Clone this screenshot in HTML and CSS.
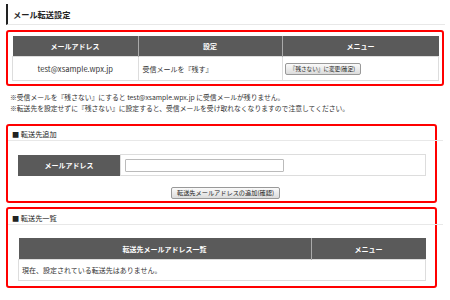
FILE: index.html
```html
<!DOCTYPE html>
<html lang="ja">
<head>
<meta charset="UTF-8">
<title>メール転送設定</title>
<link rel="stylesheet" href="styles.css">
</head>
<body>
    <div class="page">
        <h1 class="title">メール転送設定</h1>

        <!-- 現在の設定 -->
        <div class="box box-setting">
            <table class="list">
                <tr>
                    <th class="col-mail">メールアドレス</th>
                    <th class="col-set">設定</th>
                    <th>メニュー</th>
                </tr>
                <tr>
                    <td class="center">test@xsample.wpx.jp</td>
                    <td>受信メールを『残す』</td>
                    <td class="menu"><button class="btn btn-small">『残さない』に変更(確定)</button></td>
                </tr>
            </table>
        </div>

        <div class="notes">
            <p>※受信メールを『残さない』にすると test@xsample.wpx.jp に受信メールが残りません。</p>
            <p>※転送先を設定せずに『残さない』に設定すると、受信メールを受け取れなくなりますので注意してください。</p>
        </div>

        <!-- 転送先追加 -->
        <div class="box box-add">
            <h2 class="sub">■ 転送先追加</h2>
            <table class="form">
                <tr>
                    <th>メールアドレス</th>
                    <td><input type="text" class="mail-input"></td>
                </tr>
            </table>
            <div class="submit">
                <button class="btn">転送先メールアドレスの追加(確認)</button>
            </div>
        </div>

        <!-- 転送先一覧 -->
        <div class="box box-list">
            <h2 class="sub">■ 転送先一覧</h2>
            <table class="list list-forward">
                <tr>
                    <th>転送先メールアドレス一覧</th>
                    <th class="col-menu">メニュー</th>
                </tr>
                <tr>
                    <td colspan="2" class="empty">現在、設定されている転送先はありません。</td>
                </tr>
            </table>
        </div>
    </div>
</body>
</html>
```

FILE: styles.css
```css
body{
    margin:0;
    background:#fff;
    color:#333;
    font-family:"Noto Sans CJK JP", "Noto Sans", sans-serif;
    font-size:7px;
}
.page{
    width:439px;
    padding:4px 0 0 6px;
}
.title{
    margin:0;
    height:20px;
    line-height:20px;
    border-left:2px solid #222;
    padding-left:5px;
    font-size:8.2px;
    font-weight:bold;
    color:#222;
    border-bottom:1px solid #e8e8e8;
}
.box{
    width:427px;
    border:2px solid #f00;
    border-radius:3px;
}
.box-setting{
    margin-top:5px;
    padding:4px 3px 3px 4px;
}
.list{
    width:100%;
    border-collapse:collapse;
}
.list th{
    height:20px;
    padding:0;
    background:#5a5a5a;
    color:#fff;
    font-size:7px;
    font-weight:bold;
    border-left:1px solid #aaa;
}
.list th:first-child{
    border-left:none;
}
.list td{
    height:23px;
    padding:0 4px;
    border:1px solid #ddd;
    font-size:7px;
}
.col-mail{
    width:125px;
}
.col-set{
    width:143px;
}
.center{
    text-align:center;
    font-size:7.6px !important;
}
.menu{
    padding-left:2px !important;
}
.btn{
    height:12px;
    padding:0 2px;
    border:1px solid #999;
    border-radius:2px;
    background:linear-gradient(#fafafa, #dcdcdc);
    color:#222;
    font-family:"Noto Sans CJK JP", sans-serif;
    font-size:6.2px;
    line-height:10px;
}
.btn-small{
    width:76px;
    font-size:5.6px;
    padding:0 1px;
}
.notes{
    padding:6px 0 0 4px;
}
.notes p{
    margin:0;
    line-height:11px;
    font-size:6.8px;
}
.box-add{
    margin-top:10px;
    padding:2px 0 2px 0;
}
.sub{
    margin:0 -8px 0 0;
    padding-left:4px;
    height:12px;
    line-height:12px;
    font-size:7.2px;
    font-weight:normal;
    color:#222;
    border-bottom:1px solid #e8e8e8;
}
.form{
    margin:13px 0 0 10px;
    width:408px;
    border-collapse:collapse;
}
.form th{
    width:102px;
    height:21px;
    padding:0;
    background:#5a5a5a;
    color:#fff;
    font-size:7px;
    font-weight:bold;
}
.form td{
    padding:0 4px;
    border:1px solid #ddd;
}
.mail-input{
    display:block;
    width:159px;
    height:13px;
    box-sizing:border-box;
    border:1px solid #bbb;
    border-radius:1px;
    padding:0;
}
.submit{
    margin-top:11px;
    padding-left:8px;
    text-align:center;
}
.submit .btn{
    width:109px;
}
.box-list{
    margin-top:4px;
    padding:3px 0 5px 0;
}
.list-forward{
    margin:13px 0 0 10px;
    width:408px;
}
.list-forward th{
    height:21px;
}
.list-forward td{
    height:20px;
}
.col-menu{
    width:114px;
}
.empty{
    padding-left:3px !important;
}
```
